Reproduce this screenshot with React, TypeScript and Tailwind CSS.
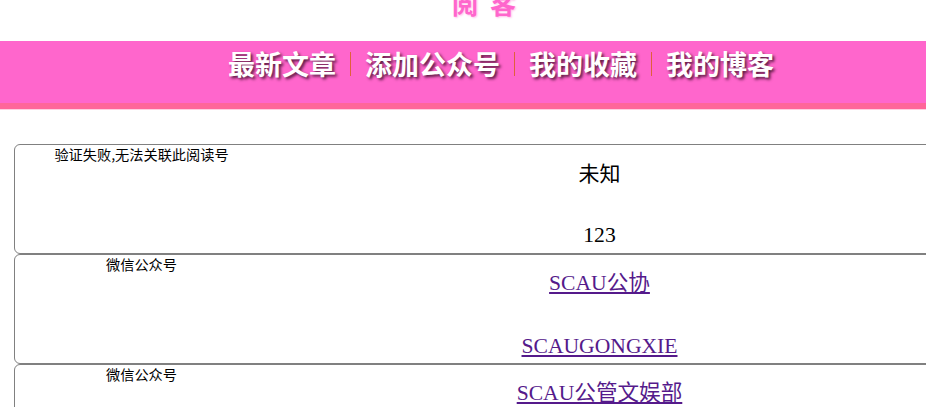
import React from "react";

type Entry = {
  label: string;
  title: string;
  sub: string;
  link: boolean;
};

const NAV = ["最新文章", "添加公众号", "我的收藏", "我的博客"];

const ENTRIES: Entry[] = [
  { label: "验证失败,无法关联此阅读号", title: "未知", sub: "123", link: false },
  { label: "微信公众号", title: "SCAU公协", sub: "SCAUGONGXIE", link: true },
  { label: "微信公众号", title: "SCAU公管文娱部", sub: "SCAUGWENYU", link: true },
];

const serif = "font-['Liberation_Serif','Noto_Sans_CJK_SC',serif]";

const Card = ({ entry }: { entry: Entry }) => {
  return (
    <div className="ml-[14px] flex h-[110px] w-[918px] shrink-0 rounded-[6px] border border-[#808080]">
      {/* 左侧类型 */}
      <div className="w-[253px] shrink-0 pt-[1px] text-center text-[14.2px] leading-[17px] text-black">
        {entry.label}
      </div>

      {/* 右侧名称 */}
      <div className="flex flex-1 flex-col items-center">
        {entry.link ? (
          <a href="#" className={`${serif} mt-[15px] text-[21.6px] leading-[26px] text-[#551a8b] underline`}>
            {entry.title}
          </a>
        ) : (
          <span className="mt-[13px] font-['Noto_Sans_CJK_SC',sans-serif] text-[21px] leading-[28px] text-black">
            {entry.title}
          </span>
        )}
        {entry.link ? (
          <a href="#" className={`${serif} mt-[37px] text-[21.6px] leading-[26px] text-[#551a8b] underline`}>
            {entry.sub}
          </a>
        ) : (
          <span className={`${serif} mt-[36px] text-[21.6px] leading-[26px] text-black`}>{entry.sub}</span>
        )}
      </div>
    </div>
  );
};

export default function App() {
  return (
    <div className="h-[407px] w-full overflow-hidden bg-white font-['Noto_Sans_CJK_SC',sans-serif]">
      {/* 标题 */}
      <div className="h-[41px] overflow-hidden">
        <div className="mt-[-10px] pl-[452px] text-[26px] font-bold leading-[26px] tracking-[12px] text-[#ff66cc] [text-shadow:1px_1px_2px_#ffc0ea]">
          阅客
        </div>
      </div>

      {/* 导航 */}
      <div className="h-[62px] bg-[#ff66cc]">
        <div className="flex items-center pl-[214px] pt-[4px]">
          {NAV.map((item, i) => (
            <React.Fragment key={item}>
              {i > 0 && <span className="h-[24px] w-px bg-[#e0603a]" />}
              <a
                href="#"
                className="px-[14px] text-[27px] font-bold leading-[38px] text-white [text-shadow:2px_2px_3px_#5a1a40]"
              >
                {item}
              </a>
            </React.Fragment>
          ))}
        </div>
      </div>
      <div className="h-[6px] bg-[#ff6699]" />
      <div className="h-px bg-[#ffd0e0]" />

      {/* 列表 */}
      <div className="mt-[34px] flex flex-col">
        {ENTRIES.map((e, i) => (
          <Card key={i} entry={e} />
        ))}
      </div>
    </div>
  );
}
